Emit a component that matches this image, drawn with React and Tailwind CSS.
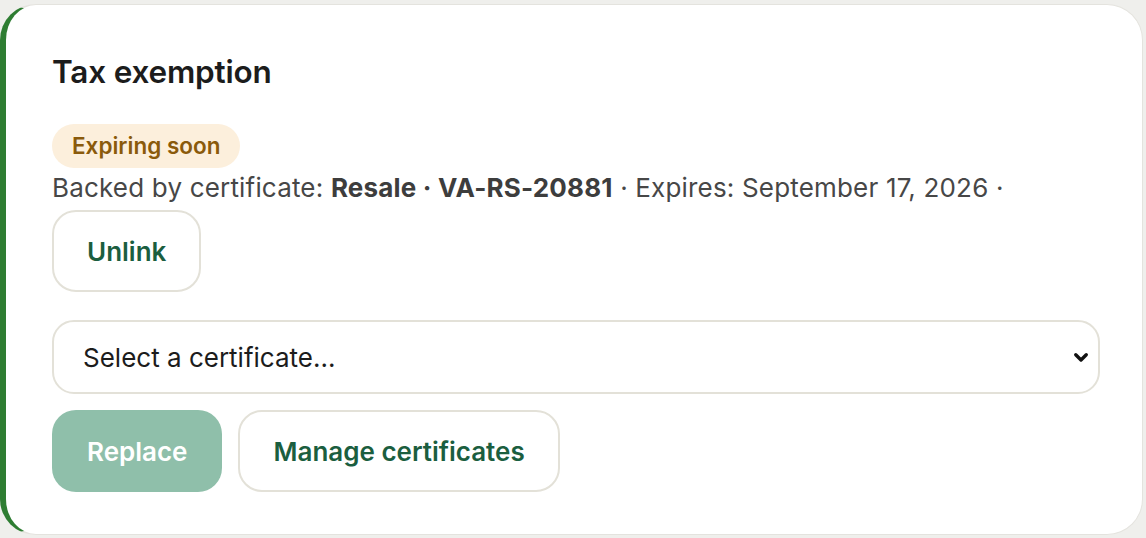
import React from 'react';

export default function App() {
  return (
    <div className="min-h-[538px] bg-[#efefec] pt-[4px] pr-[3px] pb-[3px] font-['Inter',sans-serif]">
      <div className="h-[531px] rounded-[36px] border border-[#e4e3de] border-l-[6px] border-l-[#2e7d32] bg-white pl-[46px] pr-[42px] pt-[49px]">
        <h2 className="text-[31.5px] font-semibold leading-[36px] tracking-[-0.2px] text-[#1c1c1c]">Tax exemption</h2>

        <div className="mt-[34px] flex flex-col items-start">
          <span className="rounded-full bg-[#fcefdc] px-[20px] py-[8px] text-[22.5px] font-semibold leading-[28px] text-[#8a5a0b]">
            Expiring soon
          </span>
          <p className="mt-[4px] text-[26px] leading-[32px] tracking-[0.18px] text-[#474747]">
            Backed by certificate: <span className="font-bold text-[#3d3d3d]">Resale · VA-RS-20881</span> · Expires: September 17, 2026 ·
          </p>
          <button className="mt-[6px] h-[82px] rounded-[24px] border-2 border-[#e3e1d8] bg-white px-[33px] text-[26px] font-semibold text-[#1b5e3f]">
            Unlink
          </button>
        </div>

        <div className="relative mt-[28px]">
          <select className="h-[74px] w-full appearance-none rounded-[22px] border-2 border-[#e3e1d8] bg-white pl-[29px] text-[26px] text-[#1c1c1c] outline-none">
            <option>Select a certificate...</option>
          </select>
          <svg className="pointer-events-none absolute right-[10px] top-1/2 h-[18px] w-[18px] -translate-y-1/2" viewBox="0 0 24 24" fill="none" stroke="#111" strokeWidth="4.5" strokeLinecap="round" strokeLinejoin="round">
            <path d="M5 9l7 7 7-7" />
          </svg>
        </div>

        <div className="mt-[16px] flex gap-[16px]">
          <button className="h-[82px] rounded-[24px] bg-[#8fbfaa] px-[35px] text-[26px] font-semibold text-white">
            Replace
          </button>
          <button className="h-[82px] rounded-[24px] border-2 border-[#e3e1d8] bg-white px-[33px] text-[26px] font-semibold text-[#1b5e3f]">
            Manage certificates
          </button>
        </div>
      </div>
    </div>
  );
}
